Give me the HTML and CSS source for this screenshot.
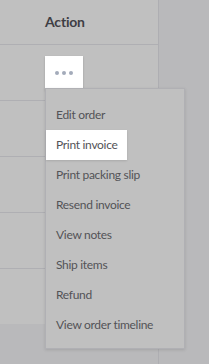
FILE: index.html
```html
<!DOCTYPE html>
<html>
<title>Orders - Action menu</title>

<head>
    <link rel="stylesheet" href="styles.css">
</head>

<body>

    <div class="page">
        <div class="orders">
            <div class="orders-head">Action</div>
            <div class="orders-row">
                <button class="more" aria-label="More actions">
                    <span class="dot"></span><span class="dot"></span><span class="dot"></span>
                </button>
            </div>
            <div class="orders-row"></div>
            <div class="orders-row"></div>
            <div class="orders-row"></div>
            <div class="orders-row"></div>
        </div>
        <div class="side"></div>
    </div>

    <!-- The dropdown -->
    <ul class="menu">
        <li><a>Edit order</a></li>
        <li><a class="active">Print invoice</a></li>
        <li><a>Print packing slip</a></li>
        <li><a>Resend invoice</a></li>
        <li><a>View notes</a></li>
        <li><a>Ship items</a></li>
        <li><a>Refund</a></li>
        <li><a>View order timeline</a></li>
    </ul>

</body>

</html>
```

FILE: styles.css
```css
* {
    box-sizing: border-box;
}

body {
    margin: 0;
    background-color: #b9b9bb;
    font-family: Lato, "Open Sans", sans-serif;
    color: #4a4a4e;
}

.page {
    display: flex;
    height: 364px;
}

.orders {
    width: 158px;
    background-color: #c0c0c0;
    align-self: flex-start;
}

.side {
    flex: 1;
    border-left: 1px solid #aeaeb2;
}

.orders-head {
    height: 45px;
    padding-left: 45px;
    padding-top: 13px;
    font-size: 14px;
    font-weight: bold;
    letter-spacing: -0.2px;
    color: #3e3e44;
    border-bottom: 1px solid #afafb3;
}

.orders-row {
    height: 56px;
    border-bottom: 1px solid #afafb3;
    padding: 11px 0 0 45px;
}

.orders-row:last-child {
    height: 55px;
    border-bottom: none;
}

/* The dots button */

.more {
    display: flex;
    align-items: center;
    justify-content: center;
    gap: 3px;
    width: 38px;
    height: 34px;
    border: none;
    padding: 0;
    background-color: #fff;
    box-shadow: 0 1px 2px rgba(0, 0, 0, 0.2);
}

.dot {
    width: 4px;
    height: 4px;
    border-radius: 50%;
    background-color: #a3abba;
}

/* The dropdown */

.menu {
    position: absolute;
    left: 45px;
    top: 88px;
    width: 140px;
    height: 261px;
    margin: 0;
    padding: 11px 0 0 0;
    list-style: none;
    background-color: #c0c0c0;
    border: 1px solid #b0b0b4;
    box-shadow: 0 1px 3px rgba(0, 0, 0, 0.12);
}

.menu li {
    height: 30px;
}

.menu a {
    display: inline-block;
    height: 30px;
    line-height: 30px;
    padding: 0 9px 0 10px;
    font-size: 12px;
    letter-spacing: -0.3px;
    color: #535357;
}

.menu a.active {
    background-color: #fff;
    box-shadow: 0 1px 2px rgba(0, 0, 0, 0.12);
}
```
